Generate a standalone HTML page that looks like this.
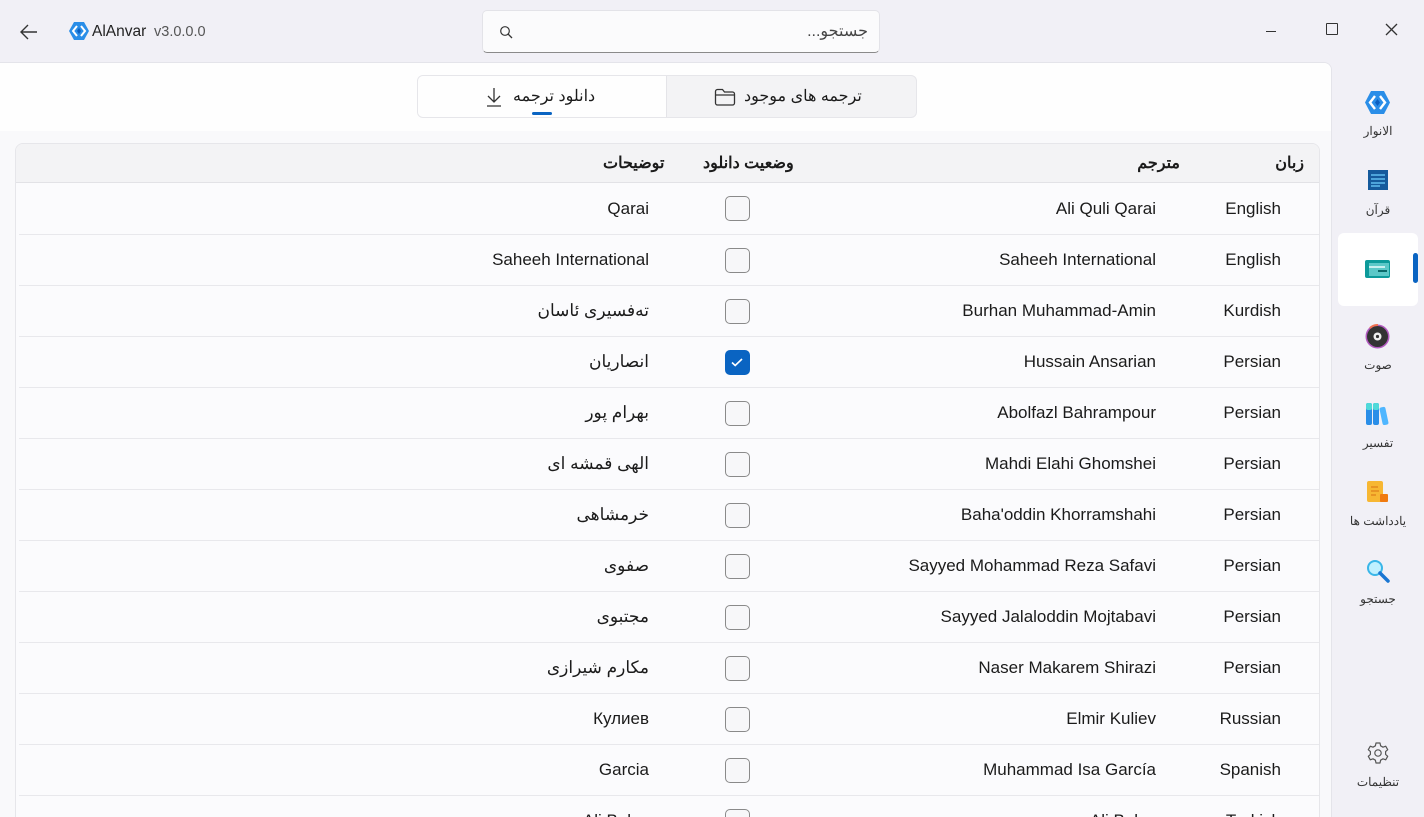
<!DOCTYPE html>
<html><head><meta charset="utf-8"><style>
*{box-sizing:border-box;margin:0;padding:0}
body{width:1424px;height:817px;overflow:hidden;background:#f1f0f6;font-family:"Liberation Sans","Noto Sans CJK SC",sans-serif;color:#1b1b1b;position:relative}
.abs{position:absolute}
.main{left:0;top:62px;width:1332px;height:755px;background:#f9f9fb;border-top:1px solid #e4e4ea;border-right:1px solid #e4e4ea;border-top-right-radius:8px;overflow:hidden}
.tabbar{left:0;top:0;width:1332px;height:68px;background:#fefefe}
.table{left:15px;top:80px;width:1305px;height:700px;border:1px solid #e6e6ea;border-radius:8px;background:#fbfbfd;overflow:hidden}
.hdr{left:0;top:0;width:100%;height:39px;background:#f3f3f5;border-bottom:1px solid #e2e2e6;font-weight:bold;font-size:16px}
.row{left:3px;width:1300px;height:51px;border-top:1px solid #e8e8ec;font-size:17px}
.t{position:absolute;top:50%;transform:translateY(-50%);white-space:nowrap}
.cb{position:absolute;left:706px;top:13px;width:25px;height:25px;border:1.5px solid #8a8a8a;border-radius:5px;background:#f7f7f9}
.cb.on{background:#0a64c2;border-color:#0a64c2}
.nav{position:absolute;left:1338px;width:80px;text-align:center;font-size:12px;color:#333}
</style></head><body>
<svg class="abs" style="left:19px;top:23px" width="20" height="18" viewBox="0 0 20 18"><path d="M18 9H2M9 2L2 9l7 7" fill="none" stroke="#333" stroke-width="1.4"/></svg>
<svg class="abs" style="left:69px;top:22px" width="20" height="18" viewBox="0 0 20 18"><polygon points="5,0 15,0 20,9 15,18 5,18 0,9" fill="#2a8ee8"/><path d="M8 4L4 9l4 5M12 4l4 5-4 5" stroke="#fff" stroke-width="2" fill="none"/><polygon points="10,6 12,9 10,12 8,9" fill="#0c5fc0"/></svg>
<div class="abs" style="left:92px;top:23px;font-size:15.5px;color:#222">AlAnvar</div>
<div class="abs" style="left:154px;top:24px;font-size:14.5px;color:#555">v3.0.0.0</div>
<div class="abs" style="left:482px;top:10px;width:398px;height:43px;background:#fbfbfc;border:1px solid #e3e3e8;border-bottom:1px solid #8a8a8a;border-radius:5px"></div>
<svg class="abs" style="left:499px;top:25px" width="14" height="14" viewBox="0 0 14 14"><circle cx="6" cy="6" r="4.3" fill="none" stroke="#333" stroke-width="1.2"/><path d="M9 9l4 4" stroke="#333" stroke-width="1.3"/></svg>
<div class="abs" style="left:700px;top:21px;width:168px;text-align:right;font-size:16px;color:#444;direction:rtl">جستجو...</div>
<div class="abs" style="left:1266px;top:31px;width:10px;height:1px;background:#333"></div>
<div class="abs" style="left:1326px;top:23px;width:12px;height:12px;border:1.3px solid #333;border-radius:1px"></div>
<svg class="abs" style="left:1385px;top:23px" width="13" height="13" viewBox="0 0 13 13"><path d="M1 1l11 11M12 1L1 12" stroke="#333" stroke-width="1.3"/></svg>

<div class="abs main">
 <div class="abs tabbar"></div>
 <div class="abs" style="left:417px;top:12px;width:500px;height:43px;border:1px solid #e6e6ea;border-radius:6px;background:#f3f3f5;overflow:hidden">
  <div class="abs" style="left:0;top:0;width:249px;height:43px;background:#fefefe;border-right:1px solid #e4e4e8"></div>
  <svg class="abs" style="left:67px;top:11px" width="18" height="20" viewBox="0 0 18 20"><path d="M9 1v13M3 9l6 6 6-6M2 19h14" fill="none" stroke="#333" stroke-width="1.3"/></svg>
  <div class="abs" style="left:95px;top:10px;font-size:16px;direction:rtl">دانلود ترجمه</div>
  <div class="abs" style="left:114px;top:36px;width:20px;height:3px;border-radius:2px;background:#0a64c2"></div>
  <svg class="abs" style="left:296px;top:11px" width="22" height="20" viewBox="0 0 22 20"><path d="M1.5 4.5a2 2 0 012-2h5l2 2.5h8a2 2 0 012 2v9a2 2 0 01-2 2h-15a2 2 0 01-2-2z M1.5 8h19" fill="none" stroke="#333" stroke-width="1.3"/></svg>
  <div class="abs" style="left:326px;top:10px;font-size:16px;direction:rtl">ترجمه های موجود</div>
 </div>
 <div class="abs table">
  <div class="abs hdr">
   <span class="t" style="right:15px">زبان</span>
   <span class="t" style="right:139px">مترجم</span>
   <span class="t" style="left:687px">وضعیت دانلود</span>
   <span class="t" style="left:587px">توضیحات</span>
  </div>
  <div id="rows"></div>
 </div>
</div>
<script>
var d=[["English","Ali Quli Qarai","Qarai"],["English","Saheeh International","Saheeh International"],["Kurdish","Burhan Muhammad-Amin","تەفسیری ئاسان"],["Persian","Hussain Ansarian","انصاریان",1],["Persian","Abolfazl Bahrampour","بهرام پور"],["Persian","Mahdi Elahi Ghomshei","الهی قمشه ای"],["Persian","Baha'oddin Khorramshahi","خرمشاهی"],["Persian","Sayyed Mohammad Reza Safavi","صفوی"],["Persian","Sayyed Jalaloddin Mojtabavi","مجتبوی"],["Persian","Naser Makarem Shirazi","مکارم شیرازی"],["Russian","Elmir Kuliev","Кулиев"],["Spanish","Muhammad Isa García","Garcia"],["Turkish","Ali Bulaç","Ali Bulaç"]];
var h="";d.forEach(function(r,i){var top=39+51*i;h+='<div class="abs row" style="top:'+top+'px'+(i==0?';border-top:none':'')+'"><span class="t" style="right:38px">'+r[0]+'</span><span class="t" style="right:163px">'+r[1]+'</span><div class="cb'+(r[3]?' on':'')+'">'+(r[3]?'<svg width="22" height="22" viewBox="0 0 22 22"><path d="M6 11.5l3.2 3L16 8" fill="none" stroke="#fff" stroke-width="1.6"/></svg>':'')+'</div><span class="t" style="right:670px;direction:rtl">'+r[2]+'</span></div>'});
document.getElementById("rows").innerHTML=h;
</script>

<div class="abs" style="left:1338px;top:233px;width:80px;height:73px;background:#fff;border-radius:6px"></div>
<div class="abs" style="left:1413px;top:253px;width:5px;height:30px;background:#0a64c2;border-radius:3px"></div>
<svg class="abs" style="left:1365px;top:91px" width="25" height="23" viewBox="0 0 25 23"><polygon points="6,0 19,0 25,11.5 19,23 6,23 0,11.5" fill="#2a8ee8"/><path d="M10 5l-5 6.5 5 6.5M15 5l5 6.5-5 6.5" stroke="#fff" stroke-width="2.4" fill="none"/><polygon points="12.5,8 15,11.5 12.5,15 10,11.5" fill="#0c5fc0"/></svg>
<div class="nav" style="top:124px">الانوار</div>
<svg class="abs" style="left:1368px;top:170px" width="20" height="20" viewBox="0 0 20 20"><rect width="20" height="20" fill="#155a9c"/><path d="M3 5h14M3 9h14M3 13h14M3 16h9" stroke="#6fd0ff" stroke-width="1.3"/></svg>
<div class="nav" style="top:203px">قرآن</div>
<svg class="abs" style="left:1365px;top:260px" width="25" height="18" viewBox="0 0 25 18"><rect width="25" height="18" rx="2" fill="#0d9a9a"/><rect x="4" y="3" width="20" height="13" fill="#5cc8c8"/><rect x="4" y="6" width="16" height="2" fill="#c8f0f0"/><rect x="13" y="10" width="9" height="2" fill="#0a6a6a"/></svg>
<svg class="abs" style="left:1365px;top:324px" width="25" height="25" viewBox="0 0 25 25"><circle cx="12.5" cy="12.5" r="12" fill="#b35ac0"/><circle cx="12.5" cy="12.5" r="10.5" fill="#333"/><circle cx="12.5" cy="12.5" r="4" fill="#f0f0f0"/><circle cx="12.5" cy="12.5" r="1.6" fill="#333"/><path d="M5 4a11 11 0 018-3" stroke="#f07050" stroke-width="2" fill="none"/></svg>
<div class="nav" style="top:358px">صوت</div>
<svg class="abs" style="left:1366px;top:403px" width="24" height="22" viewBox="0 0 24 22"><rect x="0" y="0" width="6" height="22" rx="2" fill="#2a8ee8"/><rect x="7" y="0" width="6" height="22" rx="2" fill="#2a8ee8"/><rect x="0" y="0" width="6" height="7" rx="2" fill="#4fd9d9"/><rect x="7" y="0" width="6" height="7" rx="2" fill="#4fd9d9"/><rect x="15" y="4" width="6" height="18" rx="2" fill="#4fb6ff" transform="rotate(-12 18 13)"/></svg>
<div class="nav" style="top:436px">تفسیر</div>
<svg class="abs" style="left:1367px;top:481px" width="22" height="22" viewBox="0 0 22 22"><rect width="16" height="21" rx="2" fill="#f7b733"/><rect x="13" y="13" width="8" height="8" rx="1" fill="#f07a10"/><path d="M4 6h7M4 10h8M4 14h5" stroke="#e0801a" stroke-width="1.3"/></svg>
<div class="nav" style="top:514px">یادداشت ها</div>
<svg class="abs" style="left:1366px;top:559px" width="24" height="24" viewBox="0 0 24 24"><circle cx="9" cy="9" r="7" fill="#bff0ff" stroke="#3ab6e8" stroke-width="2"/><path d="M14 14l8 8" stroke="#1976d2" stroke-width="3.5" stroke-linecap="round"/></svg>
<div class="nav" style="top:592px">جستجو</div>
<svg class="abs" style="left:1366px;top:741px" width="24" height="24" viewBox="0 0 24 24"><circle cx="12" cy="12" r="3.2" fill="none" stroke="#555" stroke-width="1.2"/><path d="M10 2h4l.6 2.8 2.4 1.4 2.7-1 2 3.5-2.1 1.9v2.8l2.1 1.9-2 3.5-2.7-1-2.4 1.4L14 22h-4l-.6-2.8-2.4-1.4-2.7 1-2-3.5 2.1-1.9v-2.8L2.3 8.7l2-3.5 2.7 1 2.4-1.4z" fill="none" stroke="#555" stroke-width="1.2" stroke-linejoin="round"/></svg>
<div class="nav" style="top:775px">تنظیمات</div>
</body></html>
